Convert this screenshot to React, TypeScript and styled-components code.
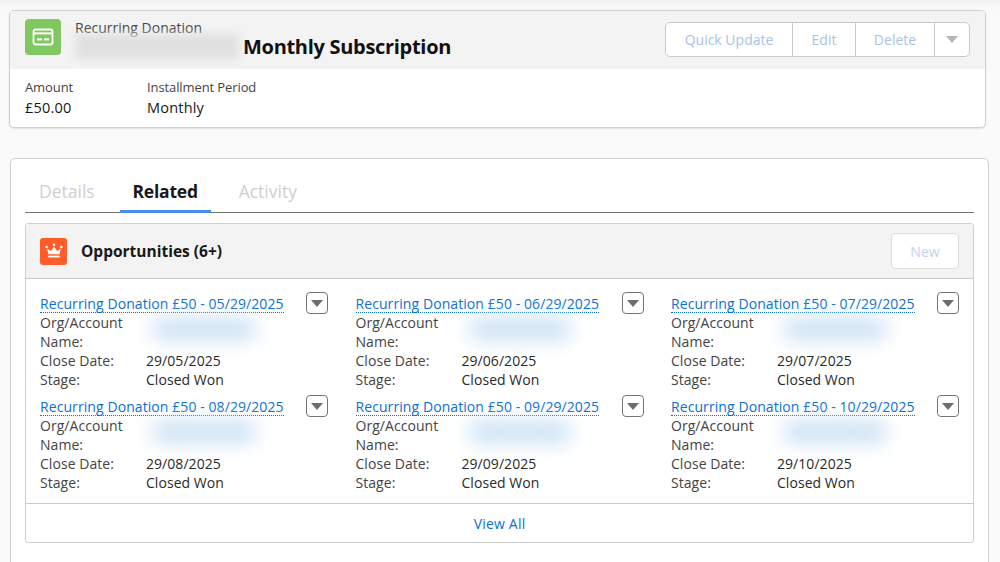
import React from 'react';
import styled, { createGlobalStyle } from 'styled-components';

const items = [
  { title: 'Recurring Donation £50 - 05/29/2025', date: '29/05/2025' },
  { title: 'Recurring Donation £50 - 06/29/2025', date: '29/06/2025' },
  { title: 'Recurring Donation £50 - 07/29/2025', date: '29/07/2025' },
  { title: 'Recurring Donation £50 - 08/29/2025', date: '29/08/2025' },
  { title: 'Recurring Donation £50 - 09/29/2025', date: '29/09/2025' },
  { title: 'Recurring Donation £50 - 10/29/2025', date: '29/10/2025' },
];

const CardIcon = () => (
  <svg width="24" height="24" viewBox="0 0 24 24" fill="none">
    <rect x="2.5" y="4.5" width="19" height="15" rx="2" stroke="#fff" strokeWidth="1.8" />
    <rect x="3" y="7.4" width="18" height="2" fill="#fff" />
    <rect x="6" y="13.4" width="5" height="2" fill="#fff" />
    <rect x="13" y="13.4" width="5" height="2" fill="#fff" />
  </svg>
);

const CrownIcon = () => (
  <svg width="18" height="18" viewBox="0 0 20 20" fill="#fff">
    <circle cx="1.8" cy="5.6" r="1.4" />
    <circle cx="10" cy="3" r="1.4" />
    <circle cx="18.2" cy="5.6" r="1.4" />
    <path d="M2.5 7.5l4.2 2.4L10 5l3.3 4.9 4.2-2.4-1.3 6H3.8z" />
    <rect x="3.6" y="15.2" width="12.8" height="2" />
  </svg>
);

const Caret = ({ color }: { color: string }) => (
  <svg width="12" height="7" viewBox="0 0 12 7">
    <path d="M0 0h12L6 7z" fill={color} />
  </svg>
);

const App: React.FC = () => (
  <Page>
    <GlobalStyle />
    <Highlights>
      <HighlightsHeader>
        <IconTile>
          <CardIcon />
        </IconTile>
        <TitleBlock>
          <ObjectName>Recurring Donation</ObjectName>
          <RecordTitle>
            <BlurredName />
            Monthly Subscription
          </RecordTitle>
        </TitleBlock>
        <ButtonGroup>
          <GroupButton $width={127}>Quick Update</GroupButton>
          <GroupButton $width={63}>Edit</GroupButton>
          <GroupButton $width={79}>Delete</GroupButton>
          <GroupButton $width={34}>
            <Caret color="#b5b5b5" />
          </GroupButton>
        </ButtonGroup>
      </HighlightsHeader>
      <HighlightsBody>
        <Field $width={122}>
          <FieldLabel>Amount</FieldLabel>
          <FieldValue>£50.00</FieldValue>
        </Field>
        <Field>
          <FieldLabel>Installment Period</FieldLabel>
          <FieldValue>Monthly</FieldValue>
        </Field>
      </HighlightsBody>
    </Highlights>

    <TabsCard>
      <TabBar>
        <Tab>Details</Tab>
        <Tab $active>Related</Tab>
        <Tab>Activity</Tab>
      </TabBar>
      <RelatedCard>
        <RelatedHeader>
          <CrownTile>
            <CrownIcon />
          </CrownTile>
          <RelatedTitle>Opportunities (6+)</RelatedTitle>
          <NewButton>New</NewButton>
        </RelatedHeader>
        <TileGrid>
          {items.map((item) => (
            <TileItem key={item.title}>
              <TileTop>
                <TileLink>{item.title}</TileLink>
                <RowMenu>
                  <Caret color="#706e6b" />
                </RowMenu>
              </TileTop>
              <Details>
                <DetailLabel>
                  Org/Account
                  <br />
                  Name:
                </DetailLabel>
                <DetailValue>
                  <BlurredLink />
                </DetailValue>
                <DetailLabel>Close Date:</DetailLabel>
                <DetailValue>{item.date}</DetailValue>
                <DetailLabel>Stage:</DetailLabel>
                <DetailValue>Closed Won</DetailValue>
              </Details>
            </TileItem>
          ))}
        </TileGrid>
        <ViewAll>View All</ViewAll>
      </RelatedCard>
    </TabsCard>
  </Page>
);

const GlobalStyle = createGlobalStyle`
  html, body {
    margin: 0;
    height: 562px;
    overflow: hidden;
    background: #fafafa;
  }
  body {
    font-family: "Open Sans", "Noto Sans", sans-serif;
    color: #181818;
  }
`;

const Page = styled.div`
  box-sizing: border-box;
  height: 562px;
  padding: 10px 14px 0 9px;
  background: linear-gradient(#f1f1f1 0, #fafafa 10px);
`;

const Highlights = styled.section`
  height: 118px;
  box-sizing: border-box;
  background: #fff;
  border: 1px solid #d0d0d0;
  border-radius: 5px;
  box-shadow: 0 1px 2px rgba(0, 0, 0, 0.1);
  overflow: hidden;
`;

const HighlightsHeader = styled.div`
  height: 58px;
  box-sizing: border-box;
  background: #f3f3f3;
  display: flex;
  align-items: flex-start;
  padding: 8px 15px 0;
`;

const IconTile = styled.div`
  width: 36px;
  height: 36px;
  border-radius: 4px;
  background: #7fc75e;
  display: flex;
  align-items: center;
  justify-content: center;
`;

const TitleBlock = styled.div`
  margin-left: 14px;
  flex: 1;
`;

const ObjectName = styled.div`
  font-size: 14px;
  line-height: 16px;
  color: #444;
  margin: 1px 0 -2px;
`;

const RecordTitle = styled.div`
  font-size: 20px;
  line-height: 24px;
  font-weight: 700;
  color: #111;
  letter-spacing: -0.3px;
  display: flex;
  align-items: center;
`;

const BlurredName = styled.span`
  width: 164px;
  height: 25px;
  margin-right: 4px;
  background: #e0e0e0;
  filter: blur(4px);
`;

const ButtonGroup = styled.div`
  display: flex;
  margin: 3px 0 0;
  height: 35px;
  box-sizing: border-box;
  background: #fff;
  border: 1px solid #c9c9c9;
  border-radius: 5px;
`;

const GroupButton = styled.div<{ $width: number }>`
  width: ${(props) => props.$width}px;
  box-sizing: border-box;
  display: flex;
  align-items: center;
  justify-content: center;
  font-size: 14px;
  color: #a9c3e3;
  border-right: 1px solid #c9c9c9;
  &:last-child {
    border-right: 0;
  }
`;

const HighlightsBody = styled.div`
  display: flex;
  padding: 9px 15px 0;
`;

const Field = styled.div<{ $width?: number }>`
  width: ${(props) => (props.$width ? `${props.$width}px` : 'auto')};
`;

const FieldLabel = styled.div`
  font-size: 13px;
  line-height: 18px;
  color: #444;
  letter-spacing: -0.1px;
`;

const FieldValue = styled.div`
  font-size: 14.5px;
  line-height: 24px;
  color: #181818;
  letter-spacing: 0.2px;
`;

const TabsCard = styled.section`
  margin: 30px -3px 0 1px;
  height: 420px;
  box-sizing: border-box;
  background: #fff;
  border: 1px solid #d0d0d0;
  border-radius: 5px;
  padding: 0 14px;
`;

const TabBar = styled.div`
  height: 54px;
  box-sizing: border-box;
  display: flex;
  align-items: flex-end;
  border-bottom: 1px solid #747474;
`;

const Tab = styled.div<{ $active?: boolean }>`
  width: ${(props) => (props.$active ? '91px' : 'auto')};
  height: 34px;
  margin: ${(props) => (props.$active ? '0 14px -1px 25px' : '0 0 -1px 14px')};
  box-sizing: border-box;
  text-align: center;
  font-size: 17.5px;
  line-height: 24px;
  font-weight: ${(props) => (props.$active ? 700 : 400)};
  letter-spacing: ${(props) => (props.$active ? '-0.2px' : '0')};
  color: ${(props) => (props.$active ? '#181818' : '#cfcfcf')};
  border-bottom: ${(props) => (props.$active ? '3px solid #4a8ae8' : '0')};
`;

const RelatedCard = styled.div`
  margin-top: 10px;
  height: 320px;
  box-sizing: border-box;
  border: 1px solid #d0d0d0;
  border-radius: 3px;
  display: flex;
  flex-direction: column;
`;

const RelatedHeader = styled.div`
  height: 55px;
  flex: none;
  box-sizing: border-box;
  background: #f3f3f3;
  border-bottom: 1px solid #c9c9c9;
  display: flex;
  align-items: center;
  padding: 0 14px;
`;

const CrownTile = styled.div`
  width: 27px;
  height: 27px;
  border-radius: 3px;
  background: #fe5c2a;
  display: flex;
  align-items: center;
  justify-content: center;
`;

const RelatedTitle = styled.div`
  flex: 1;
  margin-left: 14px;
  font-size: 15.5px;
  font-weight: 700;
  color: #181818;
`;

const NewButton = styled.div`
  width: 68px;
  height: 36px;
  box-sizing: border-box;
  background: #fff;
  border: 1px solid #dcdcdc;
  border-radius: 4px;
  display: flex;
  align-items: center;
  justify-content: center;
  font-size: 14px;
  color: #c3d3e8;
`;

const TileGrid = styled.div`
  flex: 1;
  display: grid;
  grid-template-columns: repeat(3, 315.5px);
  grid-auto-rows: 103px;
  padding: 15px 0 0 14px;
`;

const TileItem = styled.div`
  width: 288px;
`;

const TileTop = styled.div`
  display: flex;
  align-items: flex-start;
  justify-content: space-between;
  height: 19px;
`;

const TileLink = styled.span`
  font-size: 14px;
  line-height: 19px;
  letter-spacing: 0.08px;
  color: #0b70d5;
  white-space: nowrap;
  border-bottom: 1px dotted #0b70d5;
  height: 18px;
`;

const RowMenu = styled.div`
  width: 22px;
  height: 22px;
  margin-top: -2px;
  box-sizing: border-box;
  background: #fff;
  border: 1px solid #747474;
  border-radius: 4px;
  display: flex;
  align-items: center;
  justify-content: center;
`;

const Details = styled.div`
  display: grid;
  grid-template-columns: 106px 1fr;
  font-size: 14px;
  line-height: 19px;
  letter-spacing: 0.05px;
`;

const DetailLabel = styled.div`
  color: #444;
`;

const DetailValue = styled.div`
  color: #2a2a2a;
  position: relative;
`;

const BlurredLink = styled.div`
  position: absolute;
  left: 6px;
  top: 6px;
  width: 104px;
  height: 20px;
  border-radius: 10px;
  background: #c6def3;
  filter: blur(10px);
`;

const ViewAll = styled.div`
  height: 39px;
  flex: none;
  box-sizing: border-box;
  border-top: 1px solid #c9c9c9;
  display: flex;
  align-items: center;
  justify-content: center;
  font-size: 14px;
  letter-spacing: 0.2px;
  color: #0b70d5;
`;

export default App;
